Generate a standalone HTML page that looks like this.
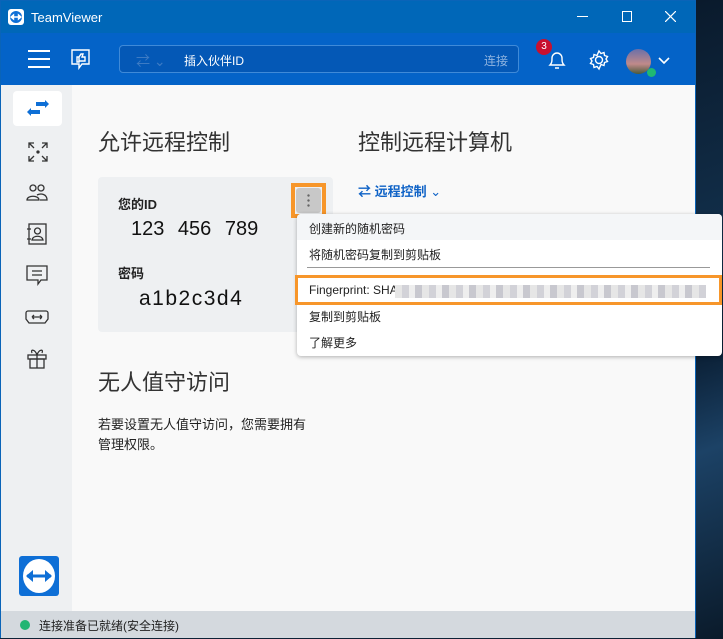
<!DOCTYPE html>
<html><head><meta charset="utf-8"><style>
*{margin:0;padding:0;box-sizing:border-box}
body{width:723px;height:639px;overflow:hidden;background:#0d2236;font-family:"Liberation Sans","Noto Sans CJK SC",sans-serif;position:relative}
.desk{position:absolute;left:695px;top:0;width:28px;height:639px;background:linear-gradient(160deg,#0a1a2c 0%,#12304c 40%,#0b2036 55%,#1c4266 70%,#0a1a2a 100%)}
.win{position:absolute;left:0;top:0;width:696px;height:638px;border:1px solid #0a64b8;background:#f9f9f9}
.title{position:absolute;left:0;top:0;width:694px;height:32px;background:#0067b8;color:#fff;font-size:13px}
.tool{position:absolute;left:0;top:32px;width:694px;height:52px;background:#0463c8}
.side{position:absolute;left:0;top:84px;width:71px;height:526px;background:#eef0f2}
.status{position:absolute;left:0;top:610px;width:694px;height:27px;background:#d4d9de;font-size:12px;color:#222}
.ab{position:absolute}
.h1{font-size:22px;color:#333;position:absolute}
.menu{position:absolute;left:296px;top:213px;width:425px;height:142px;background:#fff;border-radius:4px;box-shadow:0 1px 4px rgba(0,0,0,.3);font-size:12px;color:#222}
.menu div.i{position:absolute;left:12px}
</style></head><body>
<div class="desk"></div>
<div class="win">
<div class="title">
 <div class="ab" style="left:7px;top:8px;width:16px;height:16px;background:#fff;border-radius:3px"><svg width="16" height="16"><ellipse cx="8" cy="8" rx="6" ry="6" fill="#0e6fd6"/><path d="M3 8h10M3 8l2.5-2v4zM13 8l-2.5-2v4z" stroke="#fff" fill="#fff" stroke-width="1.4"/></svg></div>
 <div class="ab" style="left:30px;top:9px">TeamViewer</div>
 <div class="ab" style="left:576px;top:15px;width:11px;height:1px;background:#fff"></div>
 <div class="ab" style="left:621px;top:10px;width:10px;height:11px;border:1px solid #fff"></div>
 <svg class="ab" style="left:664px;top:10px" width="11" height="11"><path d="M0 0L11 11M11 0L0 11" stroke="#fff" stroke-width="1.2"/></svg>
</div>
<div class="tool">
 <svg class="ab" style="left:27px;top:17px" width="22" height="18"><path d="M0 1h22M0 9h22M0 17h22" stroke="#fff" stroke-width="2"/></svg>
 <svg class="ab" style="left:69px;top:15px" width="22" height="22" fill="none" stroke="#fff" stroke-width="1.4"><path d="M2 2h17v14h-7l-3 4v-4H2z"/><path d="M7 9h2v5H7zM9 13l2 0 4 0 0-4-3 0 1-3-2 0-2 3"/></svg>
 <div class="ab" style="left:118px;top:12px;width:400px;height:28px;border:1px solid #3f8ad8;border-radius:4px;background:#0458b6">
  <div class="ab" style="left:16px;top:5px;color:#3d7bc4;font-size:14px">⇄ ⌄</div>
  <div class="ab" style="left:64px;top:6px;color:#fff;font-size:12px">插入伙伴ID</div>
  <div class="ab" style="left:364px;top:6px;color:#8fb4e0;font-size:12px">连接</div>
 </div>
 <svg class="ab" style="left:545px;top:16px" width="22" height="22" fill="none" stroke="#fff" stroke-width="1.4"><path d="M4 16c2-2 2-4 2-7a5 5 0 0 1 10 0c0 3 0 5 2 7zM9 19h4"/></svg>
 <div class="ab" style="left:535px;top:6px;width:16px;height:16px;border-radius:8px;background:#c8102e;color:#fff;font-size:10px;text-align:center;line-height:16px">3</div>
 <svg class="ab" style="left:587px;top:16px" width="22" height="22" fill="none" stroke="#fff" stroke-width="1.4"><circle cx="11" cy="11" r="3.5"/><path d="M11 2l2 2.5 3-1 .5 3 3 1-1.5 2.5 1.5 2.5-3 1-.5 3-3-1L11 20l-2-2.5-3 1-.5-3-3-1L4 12 2.5 9.5l3-1 .5-3 3 1z"/></svg>
 <div class="ab" style="left:625px;top:16px;width:25px;height:25px;border-radius:50%;background:linear-gradient(#6b6fa8,#c08a8a 60%,#4a5a3a)"></div>
 <div class="ab" style="left:646px;top:35px;width:9px;height:9px;border-radius:50%;background:#1fb872"></div>
 <svg class="ab" style="left:657px;top:24px" width="12" height="8"><path d="M1 1l5 5 5-5" stroke="#fff" stroke-width="1.6" fill="none"/></svg>
</div>
<div class="side">
 <div class="ab" style="left:12px;top:6px;width:49px;height:35px;background:#fff;border-radius:4px"><svg class="ab" style="left:14px;top:9px" width="22" height="16" fill="#0e6fd6"><path d="M9 2h9V0l4 4-4 4V6H9zM13 10H4V8l-4 4 4 4v-2h9z"/></svg></div>
 <svg class="ab" style="left:27px;top:57px" width="20" height="20" fill="none" stroke="#333" stroke-width="1.3"><path d="M1 6V1h5M1 1l5 5M19 6V1h-5M19 1l-5 5M1 14v5h5M1 19l5-5M19 14v5h-5M19 19l-5-5"/><circle cx="10" cy="10" r="1" fill="#333"/></svg>
 <svg class="ab" style="left:25px;top:98px" width="22" height="18" fill="none" stroke="#333" stroke-width="1.3"><circle cx="7" cy="5" r="3"/><circle cx="15" cy="5" r="3"/><path d="M1 17c0-5 12-5 12 0zM11 12c4-2 10-1 10 5h-7"/></svg>
 <svg class="ab" style="left:25px;top:138px" width="22" height="22" fill="none" stroke="#333" stroke-width="1.3"><rect x="3" y="1" width="17" height="20"/><circle cx="11.5" cy="8" r="3"/><path d="M6 17c1-5 10-5 11 0zM1 6h4M1 16h4"/></svg>
 <svg class="ab" style="left:25px;top:180px" width="22" height="22" fill="none" stroke="#333" stroke-width="1.3"><path d="M1 1h20v14h-6l-3 4v-4H1z"/><path d="M6 6h10M6 10h10"/></svg>
 <svg class="ab" style="left:24px;top:224px" width="24" height="16" fill="none" stroke="#333" stroke-width="1.3"><path d="M3 2h18a2 2 0 0 1 2 2v6l-3 4H4L1 10V4a2 2 0 0 1 2-2zM7 8h10M7 8l2-2M7 8l2 2M17 8l-2-2M17 8l-2 2"/></svg>
 <svg class="ab" style="left:26px;top:262px" width="20" height="22" fill="none" stroke="#333" stroke-width="1.3"><rect x="1" y="8" width="18" height="4"/><rect x="3" y="12" width="14" height="9"/><path d="M10 8v13M10 8c-2-6-7-6-5-2M10 8c2-6 7-6 5-2"/></svg>
 <div class="ab" style="left:18px;top:471px;width:40px;height:40px;background:#0e6fd6;border-radius:3px"><svg width="40" height="40"><ellipse cx="20" cy="20" rx="16" ry="17" fill="#fff"/><path d="M8 20h24" stroke="#0e6fd6" stroke-width="3"/><path d="M7 20l7-6v12zM33 20l-7-6v12z" fill="#0e6fd6"/></svg></div>
</div>
<div class="h1" style="left:97px;top:124px">允许远程控制</div>
<div class="h1" style="left:357px;top:124px">控制远程计算机</div>
<div class="ab" style="left:97px;top:176px;width:235px;height:155px;background:#eef0f2;border-radius:4px"></div>
<div class="ab" style="left:117px;top:193px;font-size:13px;font-weight:bold;color:#222">您的ID</div>
<div class="ab" style="left:130px;top:217px;font-size:20px;color:#111;word-spacing:8px">123 456 789</div>
<div class="ab" style="left:117px;top:262px;font-size:13px;font-weight:bold;color:#222">密码</div>
<div class="ab" style="left:138px;top:286px;font-size:21px;color:#111;letter-spacing:1.5px">a1b2c3d4</div>
<div class="ab" style="left:290px;top:182px;width:35px;height:35px;border:4px solid #f7962a"><div style="position:absolute;left:1px;top:1px;width:25px;height:25px;background:#c8c8c8;border-radius:3px"></div><div style="position:absolute;left:12px;top:6px;width:3px;height:15px;background:radial-gradient(circle,#666 1px,transparent 1.4px) 0 0/3px 5px"></div></div>
<div class="ab" style="left:357px;top:180px;color:#0e62c6;font-size:13px;font-weight:bold">⇄ 远程控制 <span style="font-weight:normal">⌄</span></div>
<div class="menu">
 <div class="ab" style="left:0;top:0;width:425px;height:26px;background:#f4f6f8;border-radius:4px 4px 0 0"></div>
 <div class="i" style="top:6px">创建新的随机密码</div>
 <div class="i" style="top:32px">将随机密码复制到剪贴板</div>
 <div class="ab" style="left:10px;top:53px;width:403px;height:1px;background:#999"></div>
 <div class="ab" style="left:-2px;top:61px;width:427px;height:30px;border:3px solid #f7962a"></div>
 <div class="i" style="top:69px">Fingerprint: SHA</div>
 <div class="ab" style="left:98px;top:71px;width:311px;height:13px;background:repeating-linear-gradient(90deg,#e6e6e6 0 7px,#d2d2d8 7px 14px,#eee 14px 20px,#c8c8cf 20px 27px)"></div>
 <div class="i" style="top:94px">复制到剪贴板</div>
 <div class="i" style="top:120px">了解更多</div>
</div>
<div class="h1" style="left:97px;top:364px">无人值守访问</div>
<div class="ab" style="left:97px;top:414px;font-size:13px;color:#222;line-height:20px">若要设置无人值守访问，您需要拥有<br>管理权限。</div>
<div class="status"><div class="ab" style="left:19px;top:9px;width:10px;height:10px;border-radius:50%;background:#22b573"></div><div class="ab" style="left:38px;top:6px">连接准备已就绪(安全连接)</div></div>
</div>
</body></html>
